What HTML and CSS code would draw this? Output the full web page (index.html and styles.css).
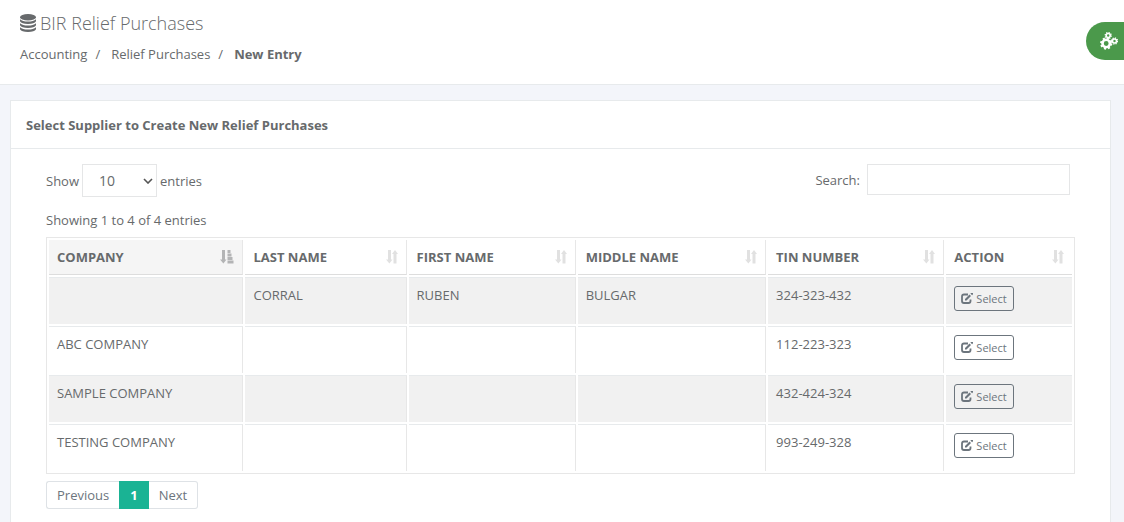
FILE: index.html
```html
<!DOCTYPE html>
<html lang="en">
<head>
<meta charset="utf-8">
<title>BIR Relief Purchases</title>
<meta name="viewport" content="width=device-width, initial-scale=1">
<link rel="stylesheet" href="styles.css">
</head>
<body>
<svg class="sprite" aria-hidden="true">
  <symbol id="sort" viewBox="0 0 12 14">
    <path d="M2 0h3v9.500H6.500L3.400 13.500 0 9.500h2z M7.500 13.500h3V4H12L9 0 6 4h1.500z"/>
  </symbol>
  <symbol id="sort-asc" viewBox="0 0 14 14">
    <path d="M2 0h3v9.500H6.500L3.400 13.500 0 9.500h2z M7.500 0h3v3H7.500z M7.500 3.500h4v3H7.500z M7.500 7h5v3H7.500z M7.500 10.500h6v3H7.500z"/>
  </symbol>
  <symbol id="edit" viewBox="0 0 12 11">
    <path d="M7 1.500H3Q1 1.500 1 3.500v4.500q0 2 2 2h4.500q2 0 2-2V6.500" fill="none" stroke="currentColor" stroke-width="1.800"/>
    <path d="M4 7.500V6L8.500 1.500 10 3 5.500 7.500z M9.400.6l.600-.6H12v1.300l-.900.900z"/>
  </symbol>
</svg>

<header class="page-head">
  <h1 class="page-title">
    <svg class="title-icon" viewBox="0 0 16 18" aria-hidden="true">
      <ellipse cx="8" cy="3.200" rx="8" ry="3.200"/>
      <path d="M0 5.300q2.500 2.300 8 2.300t8-2.300v2Q14.500 10 8 10T0 7.300z"/>
      <path d="M0 9.300q2.500 2.300 8 2.300t8-2.300v2Q14.500 14 8 14T0 11.300z"/>
      <path d="M0 13.300q2.500 2.300 8 2.300t8-2.300v2Q14.500 18 8 18T0 15.300z"/>
    </svg>
    BIR Relief Purchases
  </h1>
  <nav aria-label="Breadcrumb">
    <ol class="breadcrumb">
      <li><a href="#">Accounting</a></li>
      <li><a href="#">Relief Purchases</a></li>
      <li><strong>New Entry</strong></li>
    </ol>
  </nav>
</header>

<button class="config" type="button" aria-label="Settings">
  <svg class="config-icon" viewBox="0 0 18 18" aria-hidden="true">
    <g fill="none" stroke="#fff">
      <circle cx="6.200" cy="11.500" r="3.700" stroke-width="2.600"/>
      <circle cx="6.200" cy="11.500" r="5.200" stroke-width="1.900" stroke-dasharray="2.040 2.044"/>
      <circle cx="8.200" cy="3.500" r="2" stroke-width="1.600"/>
      <circle cx="8.200" cy="3.500" r="3" stroke-width="1.300" stroke-dasharray="1.180 1.176"/>
      <circle cx="14.500" cy="9" r="2" stroke-width="1.600"/>
      <circle cx="14.500" cy="9" r="3" stroke-width="1.300" stroke-dasharray="1.180 1.176"/>
    </g>
  </svg>
</button>

<main class="content">
  <section class="card">
    <h2 class="card-title">Select Supplier to Create New Relief Purchases</h2>
    <div class="card-body">
      <div class="toolbar">
        <label class="length">Show
          <select class="length-select"><option>10</option><option>25</option><option>50</option><option>100</option></select>
          entries</label>
        <label class="search">Search: <input class="search-input" type="search"></label>
      </div>
      <p class="info">Showing 1 to 4 of 4 entries</p>
      <table class="grid">
        <colgroup>
          <col class="c-company"><col class="c-last"><col class="c-first"><col class="c-middle"><col class="c-tin"><col class="c-action">
        </colgroup>
        <thead>
          <tr>
            <th class="sorted" scope="col"><div class="th">COMPANY<svg class="sort-asc" aria-hidden="true"><use href="#sort-asc"/></svg></div></th>
            <th scope="col"><div class="th">LAST NAME<svg class="sort" aria-hidden="true"><use href="#sort"/></svg></div></th>
            <th scope="col"><div class="th">FIRST NAME<svg class="sort" aria-hidden="true"><use href="#sort"/></svg></div></th>
            <th scope="col"><div class="th">MIDDLE NAME<svg class="sort" aria-hidden="true"><use href="#sort"/></svg></div></th>
            <th scope="col"><div class="th">TIN NUMBER<svg class="sort" aria-hidden="true"><use href="#sort"/></svg></div></th>
            <th scope="col"><div class="th">ACTION<svg class="sort" aria-hidden="true"><use href="#sort"/></svg></div></th>
          </tr>
        </thead>
        <tbody>
          <tr><td></td><td>CORRAL</td><td>RUBEN</td><td>BULGAR</td><td>324-323-432</td><td><button class="select-btn" type="button"><svg class="edit" aria-hidden="true"><use href="#edit"/></svg>Select</button></td></tr>
          <tr><td>ABC COMPANY</td><td></td><td></td><td></td><td>112-223-323</td><td><button class="select-btn" type="button"><svg class="edit" aria-hidden="true"><use href="#edit"/></svg>Select</button></td></tr>
          <tr><td>SAMPLE COMPANY</td><td></td><td></td><td></td><td>432-424-324</td><td><button class="select-btn" type="button"><svg class="edit" aria-hidden="true"><use href="#edit"/></svg>Select</button></td></tr>
          <tr><td>TESTING COMPANY</td><td></td><td></td><td></td><td>993-249-328</td><td><button class="select-btn" type="button"><svg class="edit" aria-hidden="true"><use href="#edit"/></svg>Select</button></td></tr>
        </tbody>
      </table>
      <nav class="pager" aria-label="Pagination">
        <a href="#">Previous</a><a class="current" href="#" aria-current="page">1</a><a href="#">Next</a>
      </nav>
    </div>
  </section>
</main>
</body>
</html>
```

FILE: styles.css
```css
* { box-sizing: border-box; }

html { height: 100%; }

body {
  display: flex;
  flex-direction: column;
  min-height: 100%;
  margin: 0;
  background: #f3f5fa;
  color: #676a6c;
  font: 13px/20px "Open Sans", "Noto Sans", sans-serif;
}

svg { fill: currentColor; }
.sprite { position: absolute; width: 0; height: 0; }
a { color: inherit; text-decoration: none; }

.page-head {
  padding: 11px 20px 20px;
  background: #fff;
  border-bottom: 1px solid #e7eaec;
}

.page-title {
  display: flex;
  align-items: center;
  gap: 4px;
  margin: 0 0 9px;
  font-size: 18px;
  font-weight: 300;
  line-height: 24px;
}
.title-icon { width: 16px; height: 18px; }

.breadcrumb {
  display: flex;
  margin: 0;
  padding: 0;
  list-style: none;
}
.breadcrumb li + li::before { content: "/"; padding: 0 11px 0 8px; }

.config {
  position: absolute;
  top: 22px;
  right: 0;
  width: 38px;
  height: 38px;
  padding: 0 0 0 14px;
  border: 0;
  border-radius: 19px 0 0 19px;
  background: #4b994b;
}
.config-icon { display: block; width: 18px; height: 18px; }

.content {
  display: flex;
  flex: 1;
  padding: 15px 13px 0 10px;
}

.card {
  flex: 1;
  background: #fff;
  border: 1px solid #e7eaec;
  border-bottom: 0;
}
.card-title {
  margin: 0;
  padding: 14px 15px 13px;
  border-bottom: 1px solid #e7eaec;
  font-size: 13px;
  font-weight: 700;
}
.card-body { padding: 15px 35px 12px; }

.toolbar {
  display: flex;
  justify-content: space-between;
  align-items: flex-start;
  padding-right: 5px;
}
.length { display: flex; align-items: baseline; gap: 3px; }
.search { display: flex; align-items: center; gap: 7px; }

.length-select {
  width: 75px;
  height: 33px;
  padding: 0 12px 0 16px;
  border: 1px solid #e5e6e7;
  border-radius: 0;
  background: #fff url("data:image/svg+xml,%3Csvg xmlns='http://www.w3.org/2000/svg' width='10' height='6'%3E%3Cpath d='M1 1l4 4 4-4' fill='none' stroke='%23555' stroke-width='1.6'/%3E%3C/svg%3E") no-repeat right 3px center;
  color: inherit;
  font: 14px/20px "Open Sans", "Noto Sans", sans-serif;
  appearance: none;
}
.search-input {
  width: 203px;
  height: 31px;
  padding: 4px 8px;
  border: 1px solid #e5e6e7;
  border-radius: 0;
  background: #fff;
  color: inherit;
  font: inherit;
  appearance: none;
}

.info { margin: 13px 0 7px; }

.grid {
  width: 100%;
  table-layout: fixed;
  border: 1px solid #e7e7e7;
  border-collapse: separate;
  border-spacing: 2px;
}
.c-company { width: 19.2%; }
.c-last { width: 15.9%; }
.c-first { width: 16.5%; }
.c-middle { width: 18.6%; }
.c-tin { width: 17.4%; }
.c-action { width: 12.4%; }

.grid th, .grid td {
  padding: 8px;
  border-right: 1px solid #e7e7e7;
  text-align: left;
  vertical-align: top;
}
.grid th:last-child, .grid td:last-child { border-right: 0; }
.grid th { padding: 7px 8px; border-bottom: 1px solid #ddd; }
.grid td { height: 47px; border-top: 1px solid #e7eaec; line-height: 18px; }
.grid tbody tr:nth-child(odd) td { background: #f1f1f1; }
.grid .sorted { background: #f5f5f5; }

.th { display: flex; justify-content: space-between; }
.sort, .sort-asc { height: 14px; margin-top: 3px; }
.sort { width: 12px; color: #e1e1e1; }
.sort-asc { width: 14px; color: #b3b4b5; }

.select-btn {
  display: flex;
  align-items: center;
  gap: 3px;
  height: 25px;
  padding: 0 6px;
  border: 1px solid #6c757d;
  border-radius: 3px;
  background: transparent;
  color: #6c757d;
  font: 11px/16px "Open Sans", "Noto Sans", sans-serif;
}
.edit { width: 12px; height: 11px; }

.pager { display: flex; margin-top: 7px; color: #6c757d; }
.pager a {
  padding: 3px 10px;
  border: 1px solid #dee2e6;
}
.pager a:first-child { border-right: 0; border-radius: 3px 0 0 3px; }
.pager a:last-child { border-left: 0; border-radius: 0 3px 3px 0; }
.pager .current {
  border-color: #1ab394;
  background: #1ab394;
  color: #fff;
  font-weight: 700;
}
```
